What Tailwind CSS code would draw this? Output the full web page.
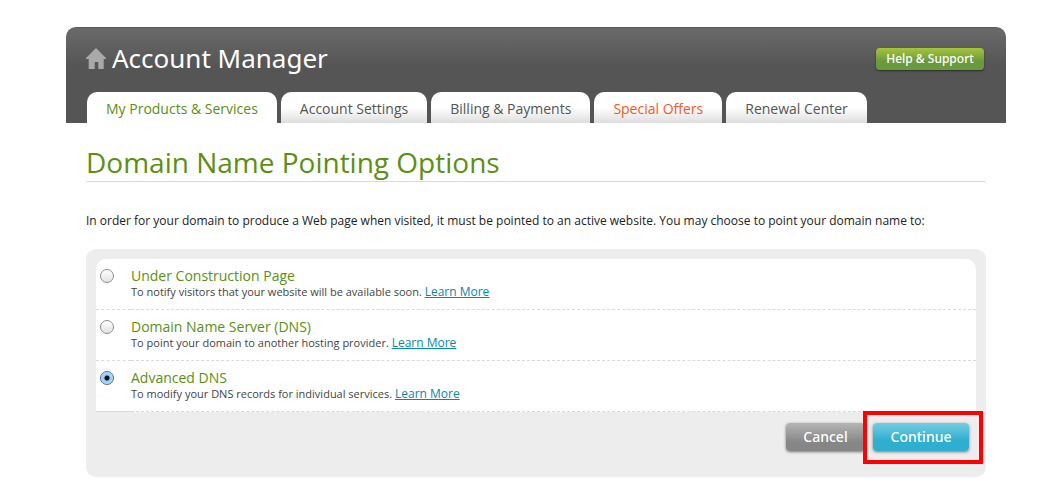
<!DOCTYPE html>
<html lang="en">
<head>
    <meta charset="UTF-8">
    <meta name="viewport" content="width=device-width, initial-scale=1.0">
    <title>Account Manager - Domain Name Pointing Options</title>
    <script src="https://cdn.jsdelivr.net/npm/@tailwindcss/browser@4"></script>
</head>
<body class="bg-white font-['Open_Sans',sans-serif] text-[#222]">
    <div class="pl-[66px] pr-[57px] pt-[27px]">
        <!-- Header -->
        <header class="rounded-t-[10px] border-t border-[#5a5a5a] bg-linear-to-b from-[#6a6a6a] to-[#555] to-40% px-5">
            <div class="flex h-16 items-center justify-between pr-0.5">
                <a href="#" class="flex items-center gap-1.5 pb-1 text-white">
                    <svg class="h-[21px] w-5" viewBox="0 0 20 21" fill="#a9a9a9" aria-hidden="true">
                        <path d="M10 0 L20 10 V11 H17.7 V21 H12.3 V14 H8.7 V21 H2.7 V11 H0 V10 Z"/>
                    </svg>
                    <h1 class="font-['Noto_Sans',sans-serif] text-[26px] leading-8">Account Manager</h1>
                </a>
                <button type="button" class="mb-0.5 h-[22px] w-[108px] rounded-[4px] bg-linear-to-b from-[#a4c639] to-[#6b9a3c] to-60% font-['Noto_Sans',sans-serif] text-[12px] leading-5 font-medium text-white shadow-[0_1px_2px_rgba(0,0,0,0.5)]">Help &amp; Support</button>
            </div>
            <!-- Tabs -->
            <nav class="flex gap-1 pl-px text-[14px] leading-5 text-[#555]">
                <a href="#" class="h-[31px] rounded-t-[10px] bg-white px-[19px] pt-[7px] text-[#5c8f12]">My Products &amp; Services</a>
                <a href="#" class="h-[31px] rounded-t-[10px] bg-linear-to-b from-white from-50% to-[#dedede] px-[19px] pt-[7px]">Account Settings</a>
                <a href="#" class="h-[31px] rounded-t-[10px] bg-linear-to-b from-white from-50% to-[#dedede] px-[19px] pt-[7px]">Billing &amp; Payments</a>
                <a href="#" class="h-[31px] rounded-t-[10px] bg-linear-to-b from-white from-50% to-[#dedede] px-[19px] pt-[7px] text-[#f15a29]">Special Offers</a>
                <a href="#" class="h-[31px] rounded-t-[10px] bg-linear-to-b from-white from-50% to-[#dedede] px-[19px] pt-[7px]">Renewal Center</a>
            </nav>
        </header>

        <!-- Content -->
        <main class="px-5">
            <h2 class="mt-[21px] border-b border-[#d9d9d9] pb-px text-[28px] leading-9 text-[#5c8f12]">Domain Name Pointing Options</h2>
            <p class="mt-[29px] text-[12px] leading-5">In order for your domain to produce a Web page when visited, it must be pointed to an active website. You may choose to point your domain name to:</p>

            <form class="mt-[18px] rounded-[10px] bg-[#ededed] p-[10px] pb-[26px]">
                <!-- Pointing options -->
                <div class="rounded-t-[10px] bg-white">
                    <div class="flex">
                        <div class="w-[35px] border-b border-dashed border-[#d9d9d9] pt-[10px] pl-1">
                            <input type="radio" name="pointing" id="construction" class="block size-[14px] appearance-none rounded-full border border-[#8e8e8e] bg-linear-to-b from-white to-[#e2e2e2] checked:border-[#5a6a9c] checked:bg-[radial-gradient(circle,#111_2px,#8cc8f8_3px,#b8e0fc_6px)]">
                        </div>
                        <div class="flex-1 border-b border-dashed border-[#d9d9d9] pt-[7px] pb-[10px]">
                            <label for="construction" class="block text-[14px] leading-5 text-[#5c8f12]">Under Construction Page</label>
                            <p class="-mt-px text-[11px] leading-[14px] text-[#444]">To notify visitors that your website will be available soon. <a href="#" class="text-[12px] text-[#0a86a6] underline">Learn More</a></p>
                        </div>
                    </div>
                    <div class="flex">
                        <div class="w-[35px] border-b border-dashed border-[#d9d9d9] pt-[10px] pl-1">
                            <input type="radio" name="pointing" id="dns" class="block size-[14px] appearance-none rounded-full border border-[#8e8e8e] bg-linear-to-b from-white to-[#e2e2e2] checked:border-[#5a6a9c] checked:bg-[radial-gradient(circle,#111_2px,#8cc8f8_3px,#b8e0fc_6px)]">
                        </div>
                        <div class="flex-1 border-b border-dashed border-[#d9d9d9] pt-[7px] pb-[10px]">
                            <label for="dns" class="block text-[14px] leading-5 text-[#5c8f12]">Domain Name Server (DNS)</label>
                            <p class="-mt-px text-[11px] leading-[14px] text-[#444]">To point your domain to another hosting provider. <a href="#" class="text-[12px] text-[#0a86a6] underline">Learn More</a></p>
                        </div>
                    </div>
                    <div class="flex">
                        <div class="w-[35px] border-b border-[#d9d9d9] pt-[10px] pl-1">
                            <input type="radio" name="pointing" id="advanced" checked class="block size-[14px] appearance-none rounded-full border border-[#8e8e8e] bg-linear-to-b from-white to-[#e2e2e2] checked:border-[#5a6a9c] checked:bg-[radial-gradient(circle,#111_2px,#8cc8f8_3px,#b8e0fc_6px)]">
                        </div>
                        <div class="flex-1 border-b border-dashed border-[#d9d9d9] pt-[7px] pb-[10px]">
                            <label for="advanced" class="block text-[14px] leading-5 text-[#5c8f12]">Advanced DNS</label>
                            <p class="-mt-px text-[11px] leading-[14px] text-[#444]">To modify your DNS records for individual services. <a href="#" class="text-[12px] text-[#0a86a6] underline">Learn More</a></p>
                        </div>
                    </div>
                </div>

                <!-- Actions -->
                <div class="mt-[11px] flex justify-end gap-2 pr-[7px]">
                    <button type="button" class="h-7 w-[79px] rounded-[4px] bg-linear-to-b from-[#b5b5b5] to-[#868686] to-70% pb-0.5 font-['Noto_Sans',sans-serif] text-[14px] font-medium text-white shadow-[0_1px_3px_rgba(0,0,0,0.5)]">Cancel</button>
                    <div class="relative">
                        <button type="submit" class="h-7 w-24 rounded-[4px] bg-linear-to-b from-[#72cde3] to-[#2fafd0] to-60% pb-0.5 font-['Noto_Sans',sans-serif] text-[14px] font-medium text-white shadow-[0_1px_3px_rgba(0,0,0,0.5)]">Continue</button>
                        <div class="pointer-events-none absolute -top-3 -right-[14px] -bottom-[13px] -left-[10px] border-4 border-[#f00]"></div>
                    </div>
                </div>
            </form>
        </main>
    </div>
</body>
</html>
